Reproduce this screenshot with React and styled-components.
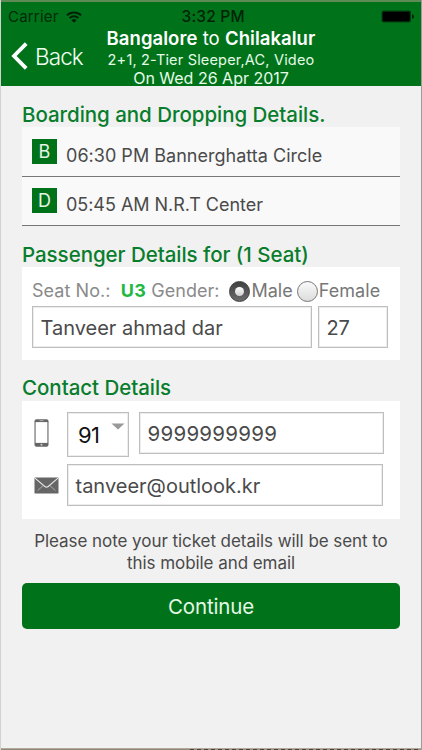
import styled, { createGlobalStyle } from 'styled-components';

const GlobalStyle = createGlobalStyle`
  *, *::before, *::after {
    box-sizing: border-box;
  }

  body {
    margin: 0;
    background-color: #f1f1f1;
    font-family: Inter, 'Liberation Sans', sans-serif;
  }

  svg {
    display: block;
    flex: none;
  }
`;

const Screen = styled.div`
  width: 422px;
  height: 750px;
  overflow: hidden;
  display: flex;
  flex-direction: column;
  background-color: #f1f1f1;
  border-left: 1px solid #d2d2d2;
  border-right: 1px solid #9c9c9c;
`;

const Text = styled.span`
  display: block;
  white-space: pre;
  color: ${props => props.$color || '#4a4a4a'};
  font-size: ${props => props.$size}px;
  font-weight: ${props => props.$weight || 400};
  line-height: ${props => props.$line || 22}px;
  letter-spacing: ${props => props.$spacing || 0}px;
`;

const Header = styled.header`
  height: 86px;
  flex: none;
  background-color: #00731a;
  border-top: 2px solid #5d8a55;
  color: #fff;
`;

const StatusBar = styled.div`
  height: 26px;
  padding: 3px 7px 0;
  display: grid;
  grid-template-columns: 1fr auto 1fr;
  align-items: center;

  & > .carrier {
    display: flex;
    align-items: center;
    gap: 7px;
  }

  & > .battery {
    justify-self: end;
  }
`;

const NavBar = styled.div`
  display: grid;
  grid-template-columns: 105px 210px;
  height: 58px;
`;

const BackButton = styled.button`
  display: flex;
  align-items: center;
  gap: 7px;
  padding: 0 0 2px 10px;
  border: 0;
  background: none;
  font-family: inherit;

  & > span {
    padding-top: 2px;
  }
`;

const Title = styled.div`
  display: flex;
  flex-direction: column;
  align-items: center;

  & b {
    font-weight: 600;
  }
`;

const Content = styled.main`
  flex: 1;
  padding: 0 21px;
  display: flex;
  flex-direction: column;
`;

const Heading = styled.h2`
  margin: 0;
  padding-top: ${props => props.$top}px;
  height: ${props => props.$height}px;
  color: #087d2c;
  font-size: 20.5px;
  font-weight: 500;
  line-height: 26px;
  letter-spacing: ${props => props.$spacing}px;
  white-space: nowrap;
`;

const StopRow = styled.div`
  height: ${props => props.$height}px;
  padding: ${props => props.$top}px 10px 0;
  display: flex;
  gap: 9px;
  background-color: #f9f9f9;
  border-bottom: 1px solid #777;

  & > span {
    padding-top: 6px;
  }
`;

const Badge = styled.div`
  width: 25px;
  height: 25px;
  display: flex;
  justify-content: center;
  background-color: #00731a;
  color: #e4f5e6;
  font-size: 18px;
  line-height: 25px;
`;

const Panel = styled.section`
  height: ${props => props.$height}px;
  padding: ${props => props.$pad};
  display: flex;
  flex-direction: column;
  background-color: #fff;
`;

const SeatRow = styled.div`
  height: 28px;
  padding-bottom: 2px;
  display: flex;
  align-items: center;
`;

const FieldRow = styled.div`
  display: flex;
  align-items: flex-start;
  gap: ${props => props.$gap}px;
  margin-bottom: ${props => props.$bottom || 0}px;
`;

const IconCell = styled.div`
  width: 35px;
  height: 42px;
  padding-left: 2px;
  display: flex;
  align-items: center;
`;

const Field = styled.div`
  width: ${props => props.$width}px;
  height: ${props => props.$height || 42}px;
  padding: 1px 0 0 ${props => props.$left || 7.5}px;
  display: flex;
  align-items: center;
  border: 1px solid #bebebe;
  box-shadow: inset 0 0 0 1px #ededed;
  background-color: #fff;

  & > svg {
    align-self: flex-start;
    margin: 9px 0 0 12px;
  }
`;

const RadioDot = styled.span`
  width: 21px;
  height: 21px;
  flex: none;
  display: flex;
  align-items: center;
  justify-content: center;
  border-radius: 50%;
  border: 1px solid ${props => props.$checked ? '#3e3e3e' : '#767676'};
  background: ${props => props.$checked
    ? 'linear-gradient(#404040, #6c6c6c)'
    : 'linear-gradient(#fafafa, #dcdcdc)'};

  &::after {
    content: '';
    width: 9px;
    height: 9px;
    border-radius: 50%;
    background: ${props => props.$checked ? 'linear-gradient(#fff, #cfcfcf)' : 'none'};
  }
`;

const Option = styled.div`
  display: flex;
  align-items: center;
  gap: 1px;
  margin-left: ${props => props.$left}px;
`;

const Note = styled.div`
  padding-top: 11px;
  height: 64px;
  display: flex;
  flex-direction: column;
  align-items: center;
`;

const ContinueButton = styled.button`
  height: 46px;
  flex: none;
  display: flex;
  align-items: center;
  justify-content: center;
  padding: 2px 0 0;
  border: 0;
  border-radius: 5px;
  background-color: #00731a;
  font-family: inherit;
`;

const BottomEdge = styled.div`
  height: 2px;
  flex: none;
  border-top: 1px solid #b3a999;
  background: repeating-linear-gradient(90deg, #4c443c 0 4px, #9c9283 4px 7px);
  background-size: 231px 1px;
  background-position: 189px 0;
  background-repeat: no-repeat;
  background-color: #8f8778;
`;

function WifiIcon() {
  return (
    <svg width='16' height='12' viewBox='0 0 16 12' fill='none' stroke='#002206' strokeWidth='2'>
      <path d='M0.9 4.4 A10 10 0 0 1 15.1 4.4' />
      <path d='M3.5 7.1 A6.4 6.4 0 0 1 12.5 7.1' />
      <path d='M8 11.8 L5.4 9.2 A3.7 3.7 0 0 1 10.6 9.2 Z' fill='#002206' stroke='none' />
    </svg>
  );
}

function BatteryIcon() {
  return (
    <svg className='battery' width='33' height='13' viewBox='0 0 33 13'>
      <rect x='0.5' y='0.5' width='29.5' height='12' rx='2' fill='#003b0c' />
      <rect x='1.7' y='1.7' width='27' height='9.6' rx='1' fill='#000' />
      <path d='M31 4 Q33 4.7 33 6.5 Q33 8.3 31 9 Z' fill='#002206' />
    </svg>
  );
}

function PhoneIcon() {
  return (
    <svg width='15' height='28' viewBox='0 0 15 28'>
      <rect x='0.5' y='0.3' width='14' height='27.4' rx='2' fill='#666' />
      <rect x='1.6' y='3.1' width='11.8' height='20.8' fill='#fff' />
      <rect x='5.5' y='1.3' width='4' height='0.8' fill='#bbb' />
      <circle cx='7.5' cy='25.7' r='1' fill='#ccc' />
    </svg>
  );
}

function MailIcon() {
  return (
    <svg width='25' height='17' viewBox='0 0 25 17'>
      <rect x='0.5' y='0.5' width='24' height='16' rx='0.6' fill='#666' />
      <path d='M1 1.2 L10.8 9.5 Q12.5 10.7 14.2 9.5 L24 1.2' fill='none' stroke='#e6e6e6' strokeWidth='1.1' />
      <path d='M3.6 13.6 L9.3 8.4 M21.4 13.6 L15.7 8.4' fill='none' stroke='#bdbdbd' strokeWidth='0.8' />
    </svg>
  );
}

const stops = [
  { letter: 'B', label: '06:30 PM Bannerghatta Circle', spacing: 0.02, height: 50, top: 12 },
  { letter: 'D', label: '05:45 AM N.R.T Center', spacing: -0.04, height: 49, top: 11 },
];

function App() {
  return (
    <>
      <GlobalStyle />
      <Screen>
        <Header>
          <StatusBar>
            <div className='carrier'>
              <Text $size={15} $color='#002a08' $spacing={0.2}>Carrier</Text>
              <WifiIcon />
            </div>
            <Text $size={15.5} $weight={500} $color='#002206' $spacing={0.2}> 3:32 PM</Text>
            <BatteryIcon />
          </StatusBar>
          <NavBar>
            <BackButton>
              <svg width='17' height='28' viewBox='0 0 17 28' fill='none' stroke='#fff' strokeWidth='3.8'>
                <path d='M15.2 1.6 L3 14 L15.2 26.4' />
              </svg>
              <Text $size={22.5} $weight={300} $color='#f1fff2' $spacing={-0.9}>Back</Text>
            </BackButton>
            <Title>
              <Text $size={18.5} $color='#fff' $line={21} $spacing={0.05}><b>Bangalore</b> to <b>Chilakalur</b></Text>
              <Text $size={14.5} $color='#e6fbe8' $line={22} $spacing={0.18}>2+1, 2-Tier Sleeper,AC, Video</Text>
              <Text $size={16} $color='#e6fbe8' $line={15} $spacing={0}>On Wed 26 Apr 2017</Text>
            </Title>
          </NavBar>
        </Header>
        <Content>
          <Heading $top={16} $height={41} $spacing={-0.04}>Boarding and Dropping Details.</Heading>
          {stops.map(stop =>
            <StopRow key={stop.letter} $height={stop.height} $top={stop.top}>
              <Badge>{stop.letter}</Badge>
              <Text $size={18} $spacing={stop.spacing}>{stop.label}</Text>
            </StopRow>
          )}
          <Heading $top={16} $height={41} $spacing={-0.04}>Passenger Details for (1 Seat)</Heading>
          <Panel $height={93} $pad='11px 10px 0'>
            <SeatRow>
              <Text $size={18} $color='#8a8a8a' $spacing={0.05}>Seat No.:  </Text>
              <Text $size={18} $color='#22b842' $weight={700} $spacing={0.4}>U3</Text>
              <Text $size={18} $color='#8a8a8a' $spacing={0}> Gender:</Text>
              <Option $left={10}>
                <RadioDot $checked />
                <Text $size={18} $color='#777' $spacing={0}>Male</Text>
              </Option>
              <Option $left={4}>
                <RadioDot />
                <Text $size={18} $color='#777' $spacing={0.1}>Female</Text>
              </Option>
            </SeatRow>
            <FieldRow $gap={6}>
              <Field $width={280}>
                <Text $size={20} $spacing={0}>Tanveer ahmad dar</Text>
              </Field>
              <Field $width={70}>
                <Text $size={20} $spacing={-0.3}>27</Text>
              </Field>
            </FieldRow>
          </Panel>
          <Heading $top={15} $height={41} $spacing={-0.04}>Contact Details</Heading>
          <Panel $height={118} $pad='11px 10px 0'>
            <FieldRow $gap={0} $bottom={7}>
              <IconCell><PhoneIcon /></IconCell>
              <FieldRow $gap={10}>
                <Field $width={62} $height={45} $left={10}>
                  <Text $size={22} $color='#111' $spacing={-0.6}>91</Text>
                  <svg width='14' height='7' viewBox='0 0 14 7'>
                    <path d='M0.5 0.5 H13.5 L7 6.5 Z' fill='#999' />
                  </svg>
                </Field>
                <Field $width={245}>
                  <Text $size={20.5} $spacing={0.25}>9999999999</Text>
                </Field>
              </FieldRow>
            </FieldRow>
            <FieldRow $gap={0}>
              <IconCell><MailIcon /></IconCell>
              <Field $width={316}>
                <Text $size={20} $spacing={0}>tanveer@outlook.kr</Text>
              </Field>
            </FieldRow>
          </Panel>
          <Note>
            <Text $size={17} $spacing={-0.06}>Please note your ticket details will be sent to</Text>
            <Text $size={17} $spacing={-0.06}>this mobile and email</Text>
          </Note>
          <ContinueButton>
            <Text $size={20.5} $color='#e4f8e6' $spacing={-0.15}>Continue</Text>
          </ContinueButton>
        </Content>
        <BottomEdge />
      </Screen>
    </>
  );
}

export default App;
